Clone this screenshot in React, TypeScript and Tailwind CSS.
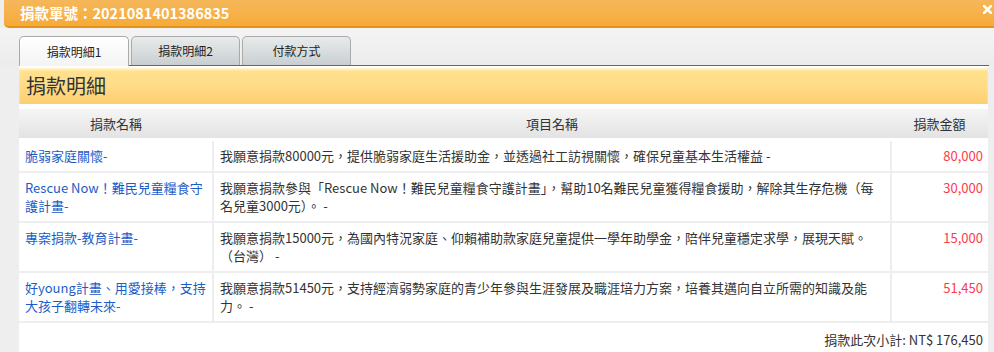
import React from 'react';

type Row = { name: string; desc: string; amount: string };

const rows: Row[] = [
  {
    name: '脆弱家庭關懷-',
    desc: '我願意捐款80000元，提供脆弱家庭生活援助金，並透過社工訪視關懷，確保兒童基本生活權益 -',
    amount: '80,000',
  },
  {
    name: 'Rescue Now！難民兒童糧食守護計畫-',
    desc: '我願意捐款參與「Rescue Now！難民兒童糧食守護計畫」，幫助10名難民兒童獲得糧食援助，解除其生存危機（每名兒童3000元）。 -',
    amount: '30,000',
  },
  {
    name: '專案捐款-教育計畫-',
    desc: '我願意捐款15000元，為國內特況家庭、仰賴補助款家庭兒童提供一學年助學金，陪伴兒童穩定求學，展現天賦。（台灣） -',
    amount: '15,000',
  },
  {
    name: '好young計畫、用愛接棒，支持大孩子翻轉未來-',
    desc: '我願意捐款51450元，支持經濟弱勢家庭的青少年參與生涯發展及職涯培力方案，培養其邁向自立所需的知識及能力。 -',
    amount: '51,450',
  },
];

const tabs = ['捐款明細1', '捐款明細2', '付款方式'];

const App: React.FC = () => {
  return (
    <div className="w-[994px] h-[352px] overflow-hidden bg-[#eeeeee] text-[#333] font-['Noto_Sans_CJK_TC','Liberation_Sans',sans-serif]">
      {/* title bar */}
      <div className="ml-[4px] h-[28px] flex items-center justify-between pl-4 pr-[2px] rounded-bl-[5px] border-b-2 border-[#e4931c] bg-gradient-to-b from-[#f5b75a] to-[#f7ab36]">
        <span className="text-white font-bold text-[14.5px] leading-none">捐款單號：2021081401386835</span>
        <svg width="9" height="9" viewBox="0 0 9 9" className="mb-[8px]">
          <path d="M1 1L8 8M8 1L1 8" stroke="#fff" strokeWidth="2.6" strokeLinecap="square" />
        </svg>
      </div>

      {/* tabs area */}
      <div className="bg-gradient-to-b from-[#f4f4f4] to-[#ececec] pt-[8px] pl-[19px] pr-[5px]">
        <div className="flex items-end gap-[2px] h-[30px] border-b border-[#666]">
          {tabs.map((t, i) => (
            <div
              key={t}
              className={
                i === 0
                  ? 'w-[110px] h-[30px] -mb-px flex items-center justify-center text-[12px] text-[#222] rounded-t-[5px] border border-b-0 border-[#aaa] bg-gradient-to-b from-[#ffffff] to-[#f4f4f4]'
                  : 'w-[109px] h-[29px] flex items-center justify-center text-[12px] text-[#222] rounded-t-[5px] border border-b-0 border-[#aaa] bg-gradient-to-b from-[#e8ebec] to-[#c9cfd1]'
              }
            >
              {t}
            </div>
          ))}
        </div>
      </div>

      {/* panel */}
      <div className="ml-[19px] w-[969px] bg-white pt-[2px] pb-[20px]">
        <div className="h-[36px] flex items-center pl-[7px] text-[20px] text-[#333] bg-gradient-to-b from-[#ffe28f] via-[#ffdc87] to-[#ffcd6f] shadow-[inset_0_2px_2px_#fff3cc]">
          捐款明細
        </div>
        <table className="mt-[5px] w-full border-collapse text-[13px] leading-[18px]">
          <thead>
            <tr className="h-[29px] bg-gradient-to-b from-[#f5f5f5] to-[#e3e3e3] text-[#333]">
              <th className="w-[194px] font-normal">捐款名稱</th>
              <th className="font-normal">項目名稱</th>
              <th className="w-[97px] font-normal">捐款金額</th>
            </tr>
            <tr className="h-[3px]">
              <td colSpan={3}></td>
            </tr>
          </thead>
          <tbody>
            {rows.map((r) => (
              <tr key={r.name} className="border-b-2 border-[#eeeeee] align-top">
                <td className="px-[6px] pt-[6px] pb-[6px] text-[#1a5cc8] border-r-2 border-[#eeeeee]">{r.name}</td>
                <td className="px-[6px] pt-[6px] pb-[6px] border-r-2 border-[#eeeeee]">{r.desc}</td>
                <td className="px-[5px] pt-[6px] pb-[6px] text-right text-[#ff3a4c]">{r.amount}</td>
              </tr>
            ))}
          </tbody>
        </table>
        <div className="pt-[8px] pr-[5px] text-right text-[13px] leading-[18px] text-[#333]">捐款此次小計: NT$ 176,450</div>
      </div>
    </div>
  );
};

export default App;
